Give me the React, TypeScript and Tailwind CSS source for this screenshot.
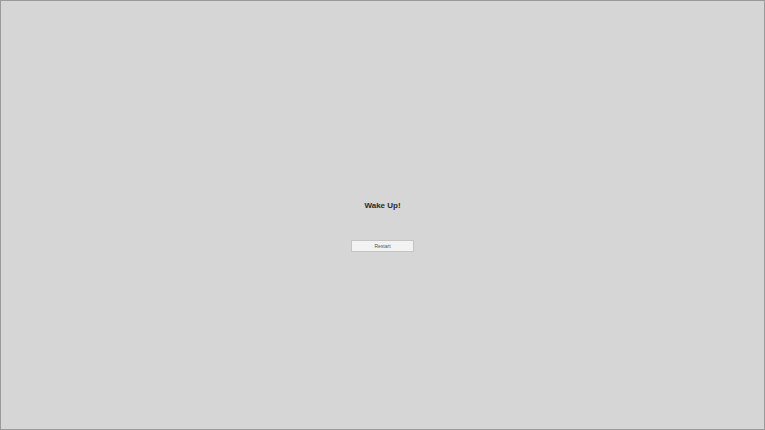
export default function App() {
  return (
    <div className="w-[765px] h-[430px] bg-[#d6d6d6] border border-[#9a9a9a] flex flex-col items-center pt-[199px] font-['Liberation_Sans',sans-serif]">
      <h1 className="text-[8px] font-bold text-[#2a2a2a] leading-[11px]">Wake Up!</h1>
      <button className="mt-[29px] w-[63px] h-[12px] bg-[#f2f2f2] border border-[#c4c4c4] text-[5px] leading-[10px] text-[#555]">
        Restart
      </button>
    </div>
  )
}
